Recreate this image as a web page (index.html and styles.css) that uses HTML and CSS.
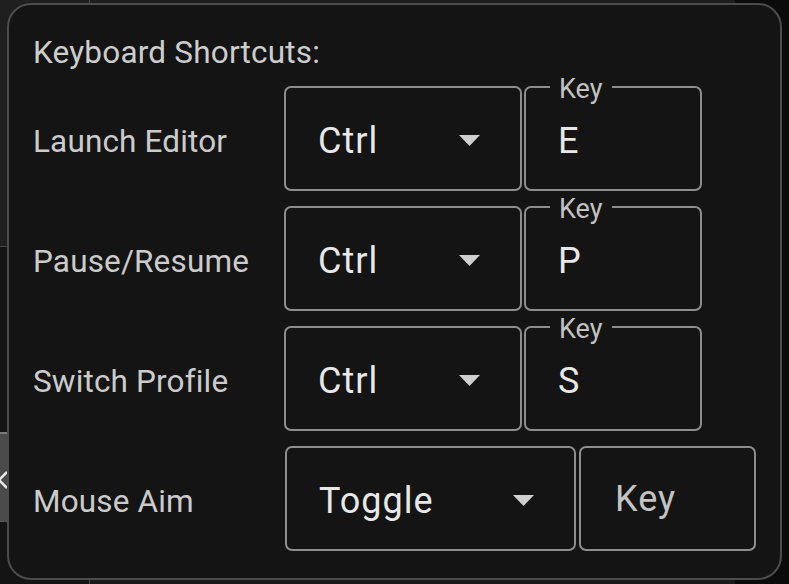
FILE: index.html
```html
<!DOCTYPE html>
<html lang="en">
<head>
<meta charset="utf-8">
<title>Keyboard Shortcuts</title>
<link rel="stylesheet" href="styles.css">
</head>
<body>
<div class="app">
  <aside class="sidebar">
    <div class="side-top"></div>
    <div class="side-mid"></div>
    <div class="side-item"><svg class="chev" width="14" height="20" viewBox="0 0 14 20"><polyline points="10,2 2,10 10,18"/></svg></div>
    <div class="side-rest"></div>
  </aside>
  <main class="main">
    <div class="main-top"></div>
  </main>
  <div class="edge"></div>
</div>

<section class="panel">
  <h2 class="title">Keyboard Shortcuts:</h2>
  <div class="rows">
    <div class="row">
      <span class="label">Launch Editor</span>
      <div class="select"><span class="value">Ctrl</span><svg class="arrow" width="21" height="11" viewBox="0 0 21 11"><polygon points="0,0 21,0 10.5,11"/></svg></div>
      <div class="keybox"><span class="legend">Key</span><span class="value">E</span></div>
    </div>
    <div class="row">
      <span class="label">Pause/Resume</span>
      <div class="select"><span class="value">Ctrl</span><svg class="arrow" width="21" height="11" viewBox="0 0 21 11"><polygon points="0,0 21,0 10.5,11"/></svg></div>
      <div class="keybox"><span class="legend">Key</span><span class="value">P</span></div>
    </div>
    <div class="row">
      <span class="label">Switch Profile</span>
      <div class="select"><span class="value">Ctrl</span><svg class="arrow" width="21" height="11" viewBox="0 0 21 11"><polygon points="0,0 21,0 10.5,11"/></svg></div>
      <div class="keybox"><span class="legend">Key</span><span class="value">S</span></div>
    </div>
    <div class="row row-wide">
      <span class="label">Mouse Aim</span>
      <div class="select"><span class="value">Toggle</span><svg class="arrow" width="21" height="11" viewBox="0 0 21 11"><polygon points="0,0 21,0 10.5,11"/></svg></div>
      <div class="keybox"><span class="placeholder">Key</span></div>
    </div>
  </div>
</section>
</body>
</html>
```

FILE: styles.css
```css
* { box-sizing: border-box; }

html, body {
  margin: 0;
  padding: 0;
}

body {
  width: 789px;
  height: 584px;
  overflow: hidden;
  background: #0b0b0b;
  font-family: Roboto, "Liberation Sans", sans-serif;
  position: relative;
}

/* background application (mostly hidden by the popover) */
.app {
  display: flex;
  height: 584px;
}

.sidebar {
  width: 90px;
  display: flex;
  flex-direction: column;
  background: #141414;
  border-right: 1px solid #4a4a4a;
}

.side-top {
  height: 247px;
  background: #1f1f1f;
  border-bottom: 1px solid #454545;
}

.side-mid {
  height: 185px;
  background: #141414;
}

.side-item {
  height: 90px;
  background: #4b4b4b;
  border-top: 2px solid #7a7a7a;
  border-bottom: 1px solid #5a5a5a;
  position: relative;
  overflow: hidden;
}

.chev {
  position: absolute;
  left: -3px;
  top: 36px;
  fill: none;
  stroke: #e6e6e6;
  stroke-width: 2.5;
}

.side-rest {
  flex: 1;
  background: #141414;
}

.main {
  width: 645px;
  background: #1b1b1b;
}

.main-top {
  height: 3px;
  background: #1e1e1e;
}

.edge {
  flex: 1;
  background: #0b0b0b;
}

/* popover */
.panel {
  position: absolute;
  left: 7px;
  top: 3px;
  width: 775px;
  height: 577px;
  background: #141414;
  border: 2px solid #4c4c4e;
  border-radius: 24px;
  padding: 32px 24px 0 24px;
}

.title {
  margin: 0 0 18px 0;
  font-size: 31.5px;
  line-height: 31px;
  font-weight: 400;
  letter-spacing: 0.2px;
  color: #cdcdcd;
}

.rows {
  display: flex;
  flex-direction: column;
  gap: 15px;
}

.row {
  display: grid;
  grid-template-columns: 249px 238px 178px;
  column-gap: 2px;
  height: 105px;
  align-items: center;
}

.row-wide {
  grid-template-columns: 249px 291px 177px;
  column-gap: 3px;
}

.label {
  font-size: 31.5px;
  line-height: 32px;
  letter-spacing: 0.15px;
  color: #cbcbcb;
  padding-top: 7px;
}

.select,
.keybox {
  position: relative;
  height: 105px;
  border: 2px solid #8e8e8e;
  border-radius: 7px;
  display: flex;
  align-items: center;
  padding: 0 0 0 32px;
}

.select {
  justify-content: space-between;
  padding-right: 40px;
}

.value {
  font-size: 36px;
  line-height: 36px;
  letter-spacing: 1px;
  color: #e8e8e8;
  padding-top: 4px;
}

.placeholder {
  font-size: 36px;
  line-height: 36px;
  letter-spacing: 1px;
  color: #c4c4c4;
  padding-left: 2px;
}

.arrow {
  fill: #cfcfcf;
  margin-top: 4px;
}

.legend {
  position: absolute;
  left: 24px;
  top: -12px;
  padding: 0 9px;
  background: #141414;
  font-size: 27px;
  line-height: 26px;
  color: #c2c2c2;
}
```
